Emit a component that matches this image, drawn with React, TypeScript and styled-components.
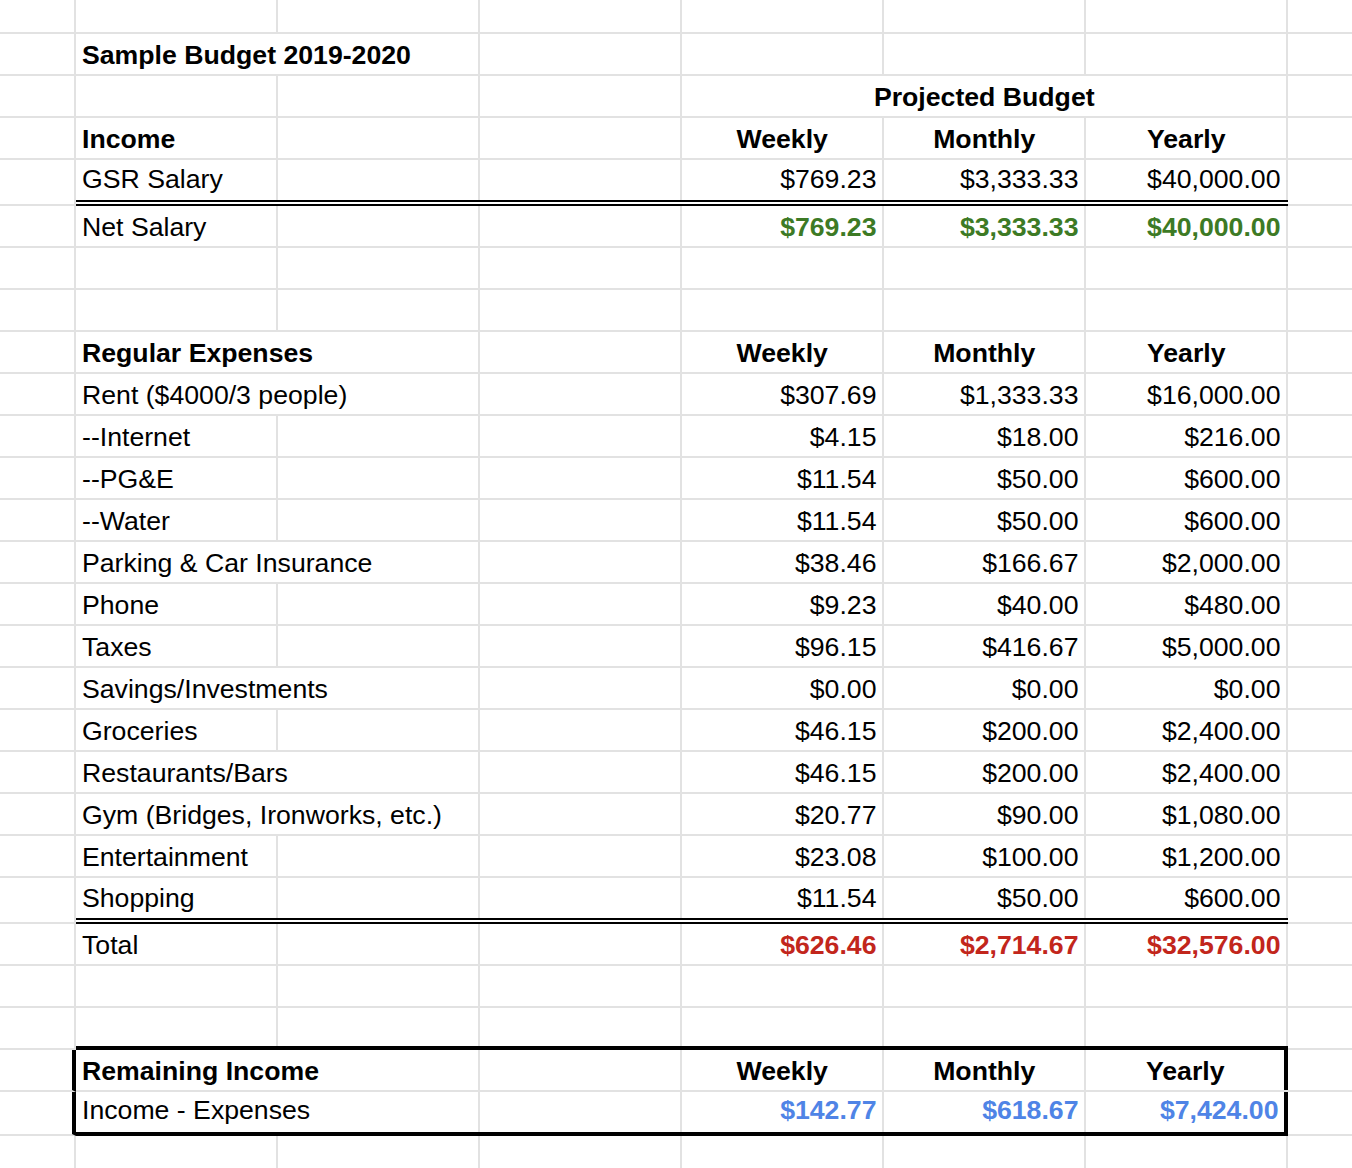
import { createGlobalStyle, styled } from 'styled-components'

const GRID = '#e2e2e2'
const COL = 202

const GREEN = '#3d7a25'
const RED = '#c2261c'
const BLUE = '#4f84e6'

type Edge = 'grid' | 'double' | 'thick'
type Align = 'left' | 'center' | 'right'

const edge = (e: Edge = 'grid') => {
  if (e === 'double') return '6px double #000'
  if (e === 'thick') return '4px solid #000'
  return `2px solid ${GRID}`
}

const justify = { left: 'flex-start', center: 'center', right: 'flex-end' }

const GlobalStyle = createGlobalStyle`
  html, body {
    margin: 0;
    padding: 0;
    background: #fff;
  }
  body {
    font-family: 'Liberation Sans', Arial, Helvetica, sans-serif;
    color: #000;
  }
`

const Sheet = styled.div`
  width: 1352px;
  height: 1168px;
  overflow: hidden;
  display: flex;
  flex-direction: column;
`

const Row = styled.div<{ $h: number }>`
  display: flex;
  flex: 0 0 ${({ $h }) => $h}px;
  height: ${({ $h }) => $h}px;
`

// column A, only the sliver at the left of the sheet
const Gutter = styled.div<{ $right?: Edge }>`
  box-sizing: border-box;
  flex: 0 0 76px;
  border-right: ${({ $right }) => edge($right)};
  border-bottom: ${edge('grid')};
`

// columns B..G, the rule under them runs unbroken
const Band = styled.div<{ $bottom?: Edge }>`
  box-sizing: border-box;
  flex: 0 0 ${COL * 6}px;
  display: flex;
  border-bottom: ${({ $bottom }) => edge($bottom)};
`

// column H, cut off by the right edge
const Tail = styled.div`
  flex: 1 0 0;
  border-bottom: ${edge('grid')};
`

const Cell = styled.div<{
  $cols?: number
  $align?: Align
  $right?: Edge
  $bold?: boolean
  $tone?: string
  $lift?: number
}>`
  box-sizing: border-box;
  flex: 0 0 ${({ $cols = 1 }) => $cols * COL}px;
  min-width: 0;
  display: flex;
  align-items: flex-end;
  justify-content: ${({ $align = 'left' }) => justify[$align]};
  padding: 0 5.5px ${({ $lift = 0 }) => 4.5 + $lift}px 6px;
  border-right: ${({ $right }) => edge($right)};
  font-size: 26.67px;
  line-height: 30px;
  font-weight: ${({ $bold }) => ($bold ? 700 : 400)};
  color: ${({ $tone }) => $tone ?? '#000'};
  white-space: nowrap;
  overflow: hidden;
`

interface LineProps {
  label?: string
  bold?: boolean
  wide?: boolean
  values?: string[]
  header?: boolean
  tone?: string
  bottom?: Edge
  boxed?: boolean
  lift?: number
  h?: number
}

function Line({
  label = '',
  bold = false,
  wide = false,
  values = ['', '', ''],
  header = false,
  tone,
  bottom = 'grid',
  boxed = false,
  lift,
  h = 42,
}: LineProps) {
  return (
    <Row $h={h}>
      <Gutter $right={boxed ? 'thick' : 'grid'} />
      <Band $bottom={bottom}>
        <Cell $cols={wide ? 2 : 1} $bold={bold} $lift={lift}>
          {label}
        </Cell>
        {!wide && <Cell />}
        <Cell />
        {values.map((v, i) => (
          <Cell
            key={i}
            $align={header ? 'center' : 'right'}
            $bold={header || !!tone}
            $tone={tone}
            $right={boxed && i === 2 ? 'thick' : 'grid'}
            $lift={lift}
          >
            {v}
          </Cell>
        ))}
      </Band>
      <Tail />
    </Row>
  )
}

const PERIODS = ['Weekly', 'Monthly', 'Yearly']

const expenses: { label: string; wide?: boolean; values: string[] }[] = [
  { label: 'Rent ($4000/3 people)', wide: true, values: ['$307.69', '$1,333.33', '$16,000.00'] },
  { label: '--Internet', values: ['$4.15', '$18.00', '$216.00'] },
  { label: '--PG&E', values: ['$11.54', '$50.00', '$600.00'] },
  { label: '--Water', values: ['$11.54', '$50.00', '$600.00'] },
  { label: 'Parking & Car Insurance', wide: true, values: ['$38.46', '$166.67', '$2,000.00'] },
  { label: 'Phone', values: ['$9.23', '$40.00', '$480.00'] },
  { label: 'Taxes', values: ['$96.15', '$416.67', '$5,000.00'] },
  { label: 'Savings/Investments', wide: true, values: ['$0.00', '$0.00', '$0.00'] },
  { label: 'Groceries', values: ['$46.15', '$200.00', '$2,400.00'] },
  { label: 'Restaurants/Bars', wide: true, values: ['$46.15', '$200.00', '$2,400.00'] },
  { label: 'Gym (Bridges, Ironworks, etc.)', wide: true, values: ['$20.77', '$90.00', '$1,080.00'] },
  { label: 'Entertainment', values: ['$23.08', '$100.00', '$1,200.00'] },
]

export default function App() {
  return (
    <>
      <GlobalStyle />
      <Sheet>
        <Line h={34} />

        <Row $h={42}>
          <Gutter />
          <Band>
            <Cell $cols={2} $bold>
              Sample Budget 2019-2020
            </Cell>
            <Cell />
            <Cell />
            <Cell />
            <Cell />
          </Band>
          <Tail />
        </Row>

        <Row $h={42}>
          <Gutter />
          <Band>
            <Cell />
            <Cell />
            <Cell />
            <Cell $cols={3} $align="center" $bold>
              Projected Budget
            </Cell>
          </Band>
          <Tail />
        </Row>

        <Line label="Income" bold header values={PERIODS} />
        <Line
          label="GSR Salary"
          values={['$769.23', '$3,333.33', '$40,000.00']}
          bottom="double"
          h={46}
          lift={1.7}
        />
        <Line label="Net Salary" tone={GREEN} values={['$769.23', '$3,333.33', '$40,000.00']} />
        <Line />
        <Line />

        <Line label="Regular Expenses" bold wide header values={PERIODS} />
        {expenses.map((e) => (
          <Line key={e.label} label={e.label} wide={e.wide} values={e.values} />
        ))}
        <Line
          label="Shopping"
          values={['$11.54', '$50.00', '$600.00']}
          bottom="double"
          h={46}
          lift={1}
        />
        <Line label="Total" tone={RED} values={['$626.46', '$2,714.67', '$32,576.00']} />
        <Line />
        <Line bottom="thick" />

        <Line label="Remaining Income" bold wide header values={PERIODS} boxed />
        <Line
          label="Income - Expenses"
          wide
          tone={BLUE}
          values={['$142.77', '$618.67', '$7,424.00']}
          boxed
          bottom="thick"
          h={44}
          lift={2.4}
        />
        <Line />
      </Sheet>
    </>
  )
}
